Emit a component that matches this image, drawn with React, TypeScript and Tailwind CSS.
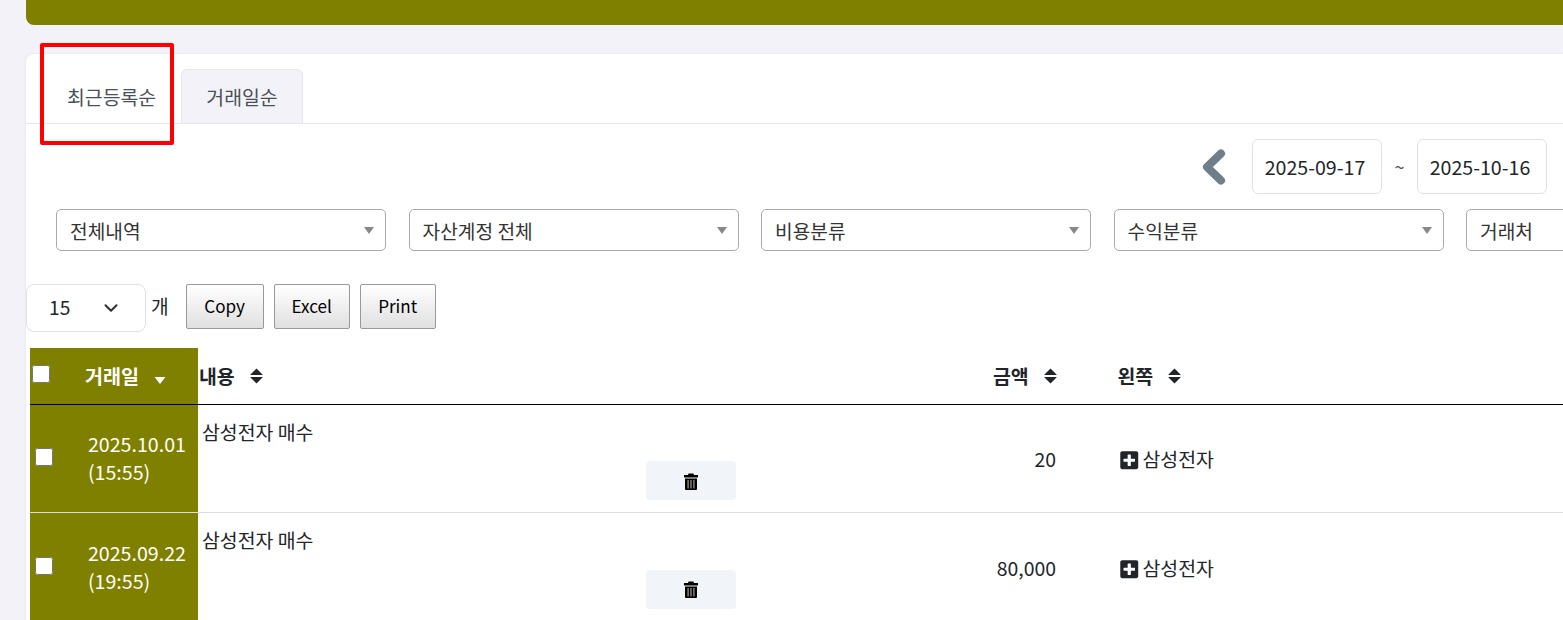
import React from "react";
import { FaPlusSquare } from "react-icons/fa";
import { ChevronDown } from "lucide-react";

const fontStack = "font-['Noto_Sans_CJK_KR','Noto_Sans',sans-serif]";

const filters = ["전체내역", "자산계정 전체", "비용분류", "수익분류", "거래처"];

const rows = [
  { date: "2025.10.01", time: "(15:55)", title: "삼성전자 매수", amount: "20", account: "삼성전자" },
  { date: "2025.09.22", time: "(19:55)", title: "삼성전자 매수", amount: "80,000", account: "삼성전자" },
];

const SortIcon = () => (
  <svg width="13" height="16" viewBox="0 0 13 16" className="ml-[15px] shrink-0">
    <path d="M6.5 0.5 L12.5 6.5 Q13 7 12 7 H1 Q0 7 0.5 6.5 Z" fill="#212529" />
    <path d="M6.5 15.5 L12.5 9.5 Q13 9 12 9 H1 Q0 9 0.5 9.5 Z" fill="#212529" />
  </svg>
);

const TrashIcon = () => (
  <svg width="14" height="17" viewBox="0 0 14 17" className="mt-[1px]">
    <path d="M4.5 0.5 H9.5 L10 2 H14 V4.5 H0 V2 H4 Z" fill="#000000" />
    <path d="M1 5.5 H13 V16 Q13 17 12 17 H2 Q1 17 1 16 Z" fill="#000000" />
    <rect x="3.4" y="7" width="1.4" height="8.5" fill="#8a8a8a" />
    <rect x="6.3" y="7" width="1.4" height="8.5" fill="#8a8a8a" />
    <rect x="9.2" y="7" width="1.4" height="8.5" fill="#8a8a8a" />
  </svg>
);

const FilterSelect = ({ label }: { label: string }) => (
  <div className="w-[330px] h-[42px] shrink-0 flex items-center justify-between border border-[#aaaaaa] rounded-[5px] pl-[13px] pr-[11px] text-[19.2px] text-[#333333]">
    <span className="mt-[2px]">{label}</span>
    <span className="w-0 h-0 border-x-[5.5px] border-x-transparent border-t-[7px] border-t-[#888888]" />
  </div>
);

const DateBox = ({ value }: { value: string }) => (
  <div className="w-[130px] h-[55px] flex items-center justify-center pr-[4px] border border-[#dee2e6] rounded-[6px] text-[19.6px] text-[#212529]">
    {value}
  </div>
);

const GreyButton = ({ label, width }: { label: string; width: string }) => (
  <button className={`${width} h-[45px] border border-[#999999] rounded-[2px] bg-gradient-to-b from-white to-[#e0e0e0] text-[17.1px] text-black pb-[2px]`}>
    {label}
  </button>
);

const HeadCell = ({ label, className }: { label: string; className: string }) => (
  <div className={`flex items-center font-bold text-[19.4px] text-[#212529] ${className}`}>
    <span>{label}</span>
    <SortIcon />
  </div>
);

export default function App() {
  return (
    <div className={`relative h-[620px] overflow-hidden bg-[#f3f2f8] pl-[26px] ${fontStack}`}>
      <div className="h-[25px] bg-[#808000] rounded-bl-lg" />

      <div className="mt-[29px] h-[600px] bg-white rounded-tl-lg shadow-[0_0_2px_rgba(0,0,0,0.1)]">
        {/* tabs */}
        <div className="flex h-[70px] pt-[15px] border-b border-[#e6e6ec]">
          <div className="w-[155px] flex items-center pl-[41px] pt-[2px] text-[19.4px] text-[#495057]">최근등록순</div>
          <div className="w-[122px] flex items-center justify-center pt-[1px] border border-b-0 border-[#e6e6ec] rounded-t-[6px] bg-[#f3f2f8] text-[19.4px] text-[#495057]">
            거래일순
          </div>
        </div>

        {/* date range */}
        <div className="mt-[15px] flex items-center justify-end pr-[16px]">
          <svg width="26" height="36" viewBox="0 0 26 36" className="mr-[25px]">
            <path d="M20 4.5 L6 18 L20 31.5" fill="none" stroke="#6e7f8a" strokeWidth="8" strokeLinecap="round" strokeLinejoin="round" />
          </svg>
          <DateBox value="2025-09-17" />
          <span className="w-[35px] text-center text-[18px] text-[#495057]">~</span>
          <DateBox value="2025-10-16" />
        </div>

        {/* filters */}
        <div className="mt-[15px] ml-[30px] flex gap-[22.5px]">
          {filters.map((f) => (
            <FilterSelect key={f} label={f} />
          ))}
        </div>

        {/* length + export buttons */}
        <div className="mt-[33px] flex items-start">
          <div className="w-[120px] h-[48px] flex items-center justify-between pl-[22px] pr-[23px] pb-[1px] border border-[#dee2e6] rounded-[8px] text-[19.2px] text-[#212529]">
            <span>15</span>
            <ChevronDown size={22} strokeWidth={2.3} className="text-[#333333]" />
          </div>
          <span className="ml-[5px] mt-[8px] text-[19.2px] text-[#212529]">개</span>
          <div className="ml-[17px] flex gap-[10px]">
            <GreyButton label="Copy" width="w-[78px]" />
            <GreyButton label="Excel" width="w-[76px]" />
            <GreyButton label="Print" width="w-[76px]" />
          </div>
        </div>

        {/* table */}
        <div className="mt-[16px] ml-[4px] w-[1600px]">
          <div className="flex h-[57px] border-b border-black">
            <div className="w-[168px] shrink-0 flex bg-[#808000] text-white">
              <input type="checkbox" className="ml-[2px] mt-[17px] w-[18px] h-[18px]" />
              <span className="ml-[35px] mt-[13px] font-bold text-[19.6px]">거래일</span>
              <svg width="12" height="7" viewBox="0 0 12 7" className="ml-[15px] mt-[29px]">
                <path d="M0.5 0 H11.5 L6 7 Z" fill="#ffffff" />
              </svg>
            </div>
            <HeadCell label="내용" className="w-[795px] shrink-0 pl-px" />
            <HeadCell label="금액" className="w-[124.5px] shrink-0" />
            <HeadCell label="왼쪽" className="shrink-0" />
          </div>

          {rows.map((r) => (
            <div key={r.date} className="flex h-[108.4px] border-b border-[#dddddd]">
              <div className="w-[168px] shrink-0 flex items-center bg-[#808000] text-white">
                <input type="checkbox" className="ml-[5px] mb-[3px] w-[18px] h-[18px]" />
                <div className="ml-[35px] mb-[1px] text-[19.6px] leading-[28px]">
                  <div>{r.date}</div>
                  <div>{r.time}</div>
                </div>
              </div>
              <div className="w-[796px] shrink-0 pl-[4px] pt-[13px] text-[19.4px] text-[#212529] leading-[28px]">
                {r.title}
                <div className="mt-[15.2px] ml-[444px] w-[90px] h-[39px] flex items-center justify-center rounded-[4px] bg-[#f1f4f8]">
                  <TrashIcon />
                </div>
              </div>
              <div className="w-[62px] shrink-0 pt-[40.2px] text-right text-[19.4px] text-[#212529] leading-[28px]">
                {r.amount}
              </div>
              <div className="ml-[63px] pt-[40.2px] flex items-start text-[19.4px] text-[#212529] leading-[28px]">
                <FaPlusSquare className="mt-[5px] mr-[3px] text-[20.5px]" />
                {r.account}
              </div>
            </div>
          ))}
        </div>
      </div>

      {/* red annotation box */}
      <div className="absolute left-[40px] top-[43px] w-[134px] h-[102px] border-[4px] border-[#ff0000] rounded-[2px]" />
    </div>
  );
}
